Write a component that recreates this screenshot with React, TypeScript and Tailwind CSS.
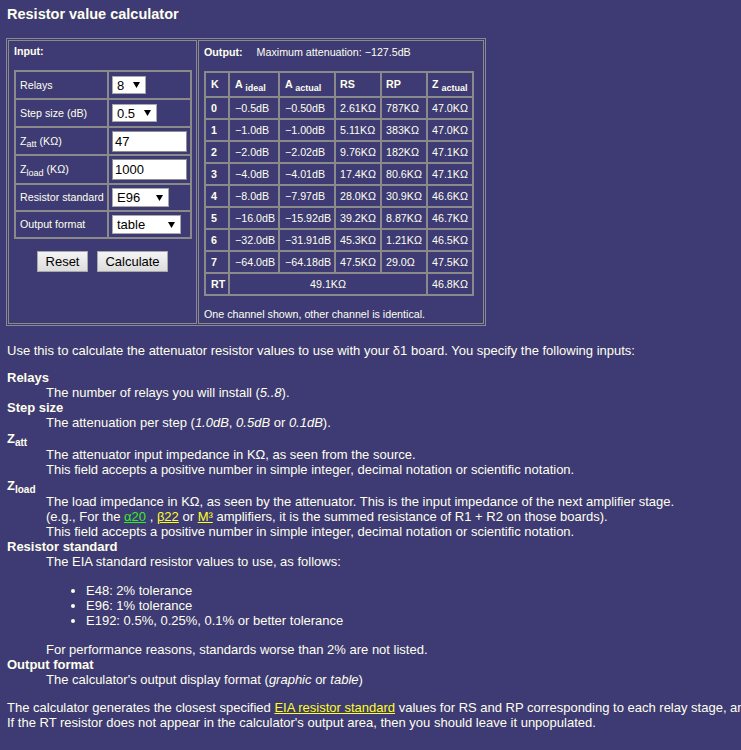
import React from "react";

function Arrow() {
  return (
    <svg width="7" height="6" viewBox="0 0 7 6" className="shrink-0">
      <path d="M0 0h7L3.5 6z" fill="#000" />
    </svg>
  );
}

function Sel({ cls, v }: { cls: string; v: string }) {
  return (
    <div
      className={`${cls} flex items-center justify-between bg-white border border-[#a9a9a9] pl-[4px] pr-[5px] text-[13px] leading-none text-black`}
    >
      <span>{v}</span>
      <Arrow />
    </div>
  );
}

function Inp({ v }: { v: string }) {
  return (
    <div className="w-[75px] h-[21px] flex items-center bg-white border border-[#8f8f8f] pl-[2px] text-[13px] leading-none text-black">
      {v}
    </div>
  );
}

const cell = "border border-[#8a8a8a]";

const rows: [string, string, string, string, string][] = [
  ["−0.5dB", "−0.50dB", "2.61KΩ", "787KΩ", "47.0KΩ"],
  ["−1.0dB", "−1.00dB", "5.11KΩ", "383KΩ", "47.0KΩ"],
  ["−2.0dB", "−2.02dB", "9.76KΩ", "182KΩ", "47.1KΩ"],
  ["−4.0dB", "−4.01dB", "17.4KΩ", "80.6KΩ", "47.1KΩ"],
  ["−8.0dB", "−7.97dB", "28.0KΩ", "30.9KΩ", "46.6KΩ"],
  ["−16.0dB", "−15.92dB", "39.2KΩ", "8.87KΩ", "46.7KΩ"],
  ["−32.0dB", "−31.91dB", "45.3KΩ", "1.21KΩ", "46.5KΩ"],
  ["−64.0dB", "−64.18dB", "47.5KΩ", "29.0Ω", "47.5KΩ"],
];

export default function App() {
  return (
    <div className="w-[741px] h-[750px] overflow-hidden bg-[#3e3b74] text-[#ffffee] font-['Liberation_Sans',Arial,sans-serif] px-[6px] pt-[6px]">
      <h1 className="text-[14.5px] leading-[17px] font-bold pl-[1px]">Resistor value calculator</h1>

      <div className="mt-[15px] w-fit flex gap-[1px] border border-[#8a8a8a] p-[1px]">
        {/* Input cell */}
        <div className={`${cell} w-[189px] h-[284px] pt-[4px] pl-[5px]`}>
          <div className="text-[10.7px] leading-[13px] font-bold">Input:</div>
          <table className="mt-[12px] border-separate border-spacing-0 border border-[#8a8a8a] text-[10.7px]">
            <tbody>
              <tr className="h-[28px]">
                <td className={`${cell} w-[93px] pl-[4px]`}>Relays</td>
                <td className={`${cell} w-[83px] pl-[3px]`}>
                  <Sel cls="w-[34px] h-[18px]" v="8" />
                </td>
              </tr>
              <tr className="h-[28px]">
                <td className={`${cell} pl-[4px]`}>Step size (dB)</td>
                <td className={`${cell} pl-[3px]`}>
                  <Sel cls="w-[45px] h-[18px]" v="0.5" />
                </td>
              </tr>
              <tr className="h-[28px]">
                <td className={`${cell} pl-[4px]`}>
                  Z<sub className="text-[9px]">att</sub> (KΩ)
                </td>
                <td className={`${cell} pl-[3px]`}>
                  <Inp v="47" />
                </td>
              </tr>
              <tr className="h-[29px]">
                <td className={`${cell} pl-[4px]`}>
                  Z<sub className="text-[9px]">load</sub> (KΩ)
                </td>
                <td className={`${cell} pl-[3px]`}>
                  <Inp v="1000" />
                </td>
              </tr>
              <tr className="h-[27px]">
                <td className={`${cell} pl-[4px] whitespace-nowrap`}>Resistor standard</td>
                <td className={`${cell} pl-[3px]`}>
                  <Sel cls="w-[57px] h-[19px]" v="E96" />
                </td>
              </tr>
              <tr className="h-[27px]">
                <td className={`${cell} pl-[4px]`}>Output format</td>
                <td className={`${cell} pl-[3px]`}>
                  <Sel cls="w-[69px] h-[19px]" v="table" />
                </td>
              </tr>
            </tbody>
          </table>
          <div className="mt-[12px] flex justify-center gap-[9px] pr-[5px]">
            <button className="w-[51px] h-[21px] bg-gradient-to-b from-[#f4f4f4] to-[#dcdcdc] border border-[#a8a8a8] text-[13px] leading-none text-black">
              Reset
            </button>
            <button className="w-[71px] h-[21px] bg-gradient-to-b from-[#f4f4f4] to-[#dcdcdc] border border-[#a8a8a8] text-[13px] leading-none text-black">
              Calculate
            </button>
          </div>
        </div>

        {/* Output cell */}
        <div className={`${cell} w-[286px] h-[284px] pt-[5px] pl-[5px]`}>
          <div className="text-[10.7px] leading-[13px]">
            <span className="font-bold">Output:</span>
            <span className="ml-[14px]">Maximum attenuation: −127.5dB</span>
          </div>
          <table className="mt-[12px] table-fixed w-[270px] border-separate border-spacing-0 border border-[#8a8a8a] text-[10.7px]">
            <thead>
              <tr className="h-[25px]">
                <th className={`${cell} w-[24px] pl-[5px] text-left`}>K</th>
                <th className={`${cell} w-[50px] pl-[5px] text-left whitespace-nowrap`}>
                  A <sub className="text-[9px]">ideal</sub>
                </th>
                <th className={`${cell} w-[56px] pl-[5px] text-left whitespace-nowrap`}>
                  A <sub className="text-[9px]">actual</sub>
                </th>
                <th className={`${cell} w-[46px] pl-[4px] text-left`}>RS</th>
                <th className={`${cell} w-[46px] pl-[4px] text-left`}>RP</th>
                <th className={`${cell} w-[46px] pl-[4px] text-left whitespace-nowrap`}>
                  Z <sub className="text-[9px]">actual</sub>
                </th>
              </tr>
            </thead>
            <tbody>
              {rows.map((r, i) => (
                <tr key={i} className="h-[22px]">
                  <th className={`${cell} pl-[5px] text-left`}>{i}</th>
                  <td className={`${cell} pl-[5px] whitespace-nowrap`}>{r[0]}</td>
                  <td className={`${cell} pl-[5px] whitespace-nowrap`}>{r[1]}</td>
                  <td className={`${cell} pl-[4px] whitespace-nowrap`}>{r[2]}</td>
                  <td className={`${cell} pl-[4px] whitespace-nowrap`}>{r[3]}</td>
                  <td className={`${cell} pl-[4px] whitespace-nowrap`}>{r[4]}</td>
                </tr>
              ))}
              <tr className="h-[22px]">
                <th className={`${cell} pl-[5px] text-left`}>RT</th>
                <td colSpan={4} className={`${cell} text-center`}>
                  49.1KΩ
                </td>
                <td className={`${cell} pl-[4px] whitespace-nowrap`}>46.8KΩ</td>
              </tr>
            </tbody>
          </table>
          <div className="mt-[12px] text-[10.7px] leading-[13px]">
            One channel shown, other channel is identical.
          </div>
        </div>
      </div>

      <div className="mt-[17px] pl-[1px] text-[13px] leading-[15px]">
        <p>
          Use this to calculate the attenuator resistor values to use with your δ1 board. You specify the following
          inputs:
        </p>
        <dl className="mt-[12px]">
          <dt className="font-bold">Relays</dt>
          <dd className="ml-[39px]">
            The number of relays you will install (<i>5..8</i>).
          </dd>
          <dt className="font-bold">Step size</dt>
          <dd className="ml-[39px]">
            The attenuation per step (<i>1.0dB</i>, <i>0.5dB</i> or <i>0.1dB</i>).
          </dd>
          <dt className="font-bold leading-[17px]">
            Z<sub className="text-[10px]">att</sub>
          </dt>
          <dd className="ml-[39px]">
            The attenuator input impedance in KΩ, as seen from the source.
            <br />
            This field accepts a positive number in simple integer, decimal notation or scientific notation.
          </dd>
          <dt className="font-bold leading-[17px]">
            Z<sub className="text-[10px]">load</sub>
          </dt>
          <dd className="ml-[39px]">
            The load impedance in KΩ, as seen by the attenuator. This is the input impedance of the next amplifier
            stage.
            <br />
            (e.g., For the <span className="text-[#33ee22] underline">α20</span> ,{" "}
            <span className="text-[#ffff22] underline">β22</span> or{" "}
            <span className="text-[#ffff22] underline">M³</span> amplifiers, it is the summed resistance of R1 + R2 on
            those boards).
            <br />
            This field accepts a positive number in simple integer, decimal notation or scientific notation.
          </dd>
          <dt className="font-bold">Resistor standard</dt>
          <dd className="ml-[39px]">
            The EIA standard resistor values to use, as follows:
            <ul className="list-disc pl-[40px] my-[14px]">
              <li>E48: 2% tolerance</li>
              <li>E96: 1% tolerance</li>
              <li>E192: 0.5%, 0.25%, 0.1% or better tolerance</li>
            </ul>
            For performance reasons, standards worse than 2% are not listed.
          </dd>
          <dt className="font-bold">Output format</dt>
          <dd className="ml-[39px]">
            The calculator's output display format (<i>graphic</i> or <i>table</i>)
          </dd>
        </dl>
        <p className="mt-[13px] whitespace-nowrap">
          The calculator generates the closest specified{" "}
          <span className="text-[#ffff22] underline">EIA resistor standard</span> values for RS and RP corresponding
          to each relay stage, and for the shunt resistor RT.
          <br />
          If the RT resistor does not appear in the calculator's output area, then you should leave it unpopulated.
        </p>
      </div>
    </div>
  );
}
